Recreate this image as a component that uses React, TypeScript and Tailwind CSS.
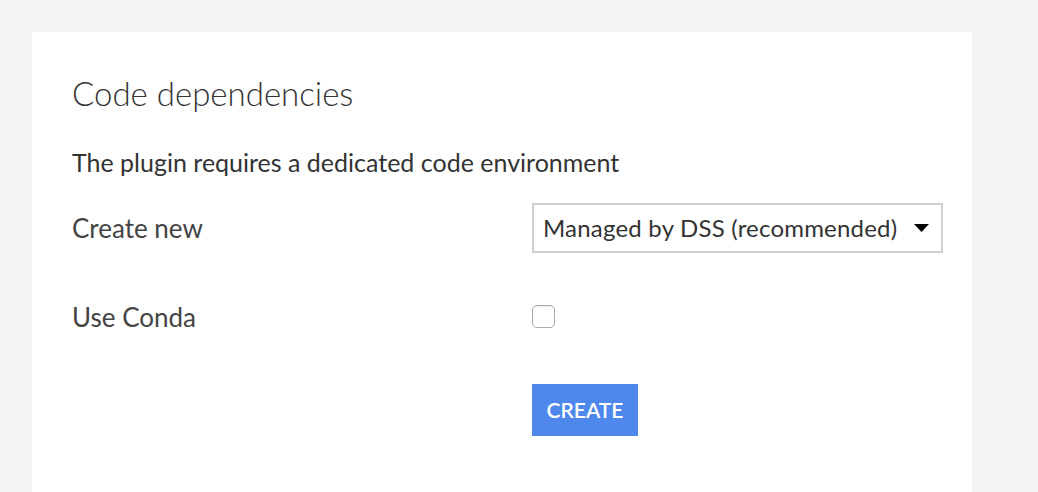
export default function App() {
  return (
    <div
      className="h-[492px] w-[1038px] overflow-hidden bg-[#f3f3f3] pl-8 pt-8"
      style={{ fontFamily: "Lato, 'Noto Sans', sans-serif" }}
    >
      <div className="h-[460px] w-[940px] bg-white pl-10 pt-[41px] text-[#333]">
        {/* Title */}
        <h2 className="text-[33px] font-light leading-[40px]">Code dependencies</h2>

        <p className="mt-[35px] text-[25px] leading-[28px]">
          The plugin requires a dedicated code environment
        </p>

        {/* Form */}
        <div className="mt-[27px] flex flex-col">
          <div className="flex h-[50px] items-center">
            <label className="w-[460px] text-[26px] text-[#444]">Create new</label>
            <div className="flex h-[50px] w-[411px] items-center justify-between border-2 border-[#cfcfcf] pl-[9px] pr-[12px] text-[24px] text-[#333]">
              <span className="tracking-[0.2px]">Managed by DSS (recommended)</span>
              <svg width="15" height="8" viewBox="0 0 15 8">
                <path d="M0 0 L15 0 L7.5 8 Z" fill="#000" />
              </svg>
            </div>
          </div>

          <div className="mt-[51px] flex h-[24px] items-center">
            <label className="w-[460px] pt-[3px] text-[26px] text-[#444]">Use Conda</label>
            <div className="h-[23px] w-[23px] rounded-[5px] border border-[#aaa] bg-white shadow-[inset_0_1px_1px_rgba(0,0,0,0.08)]" />
          </div>

          <div className="mt-[56px] flex">
            <div className="w-[460px]" />
            <button className="h-[52px] w-[106px] bg-[#4f88ec] text-[21px] font-semibold text-white">
              CREATE
            </button>
          </div>
        </div>
      </div>
    </div>
  );
}
